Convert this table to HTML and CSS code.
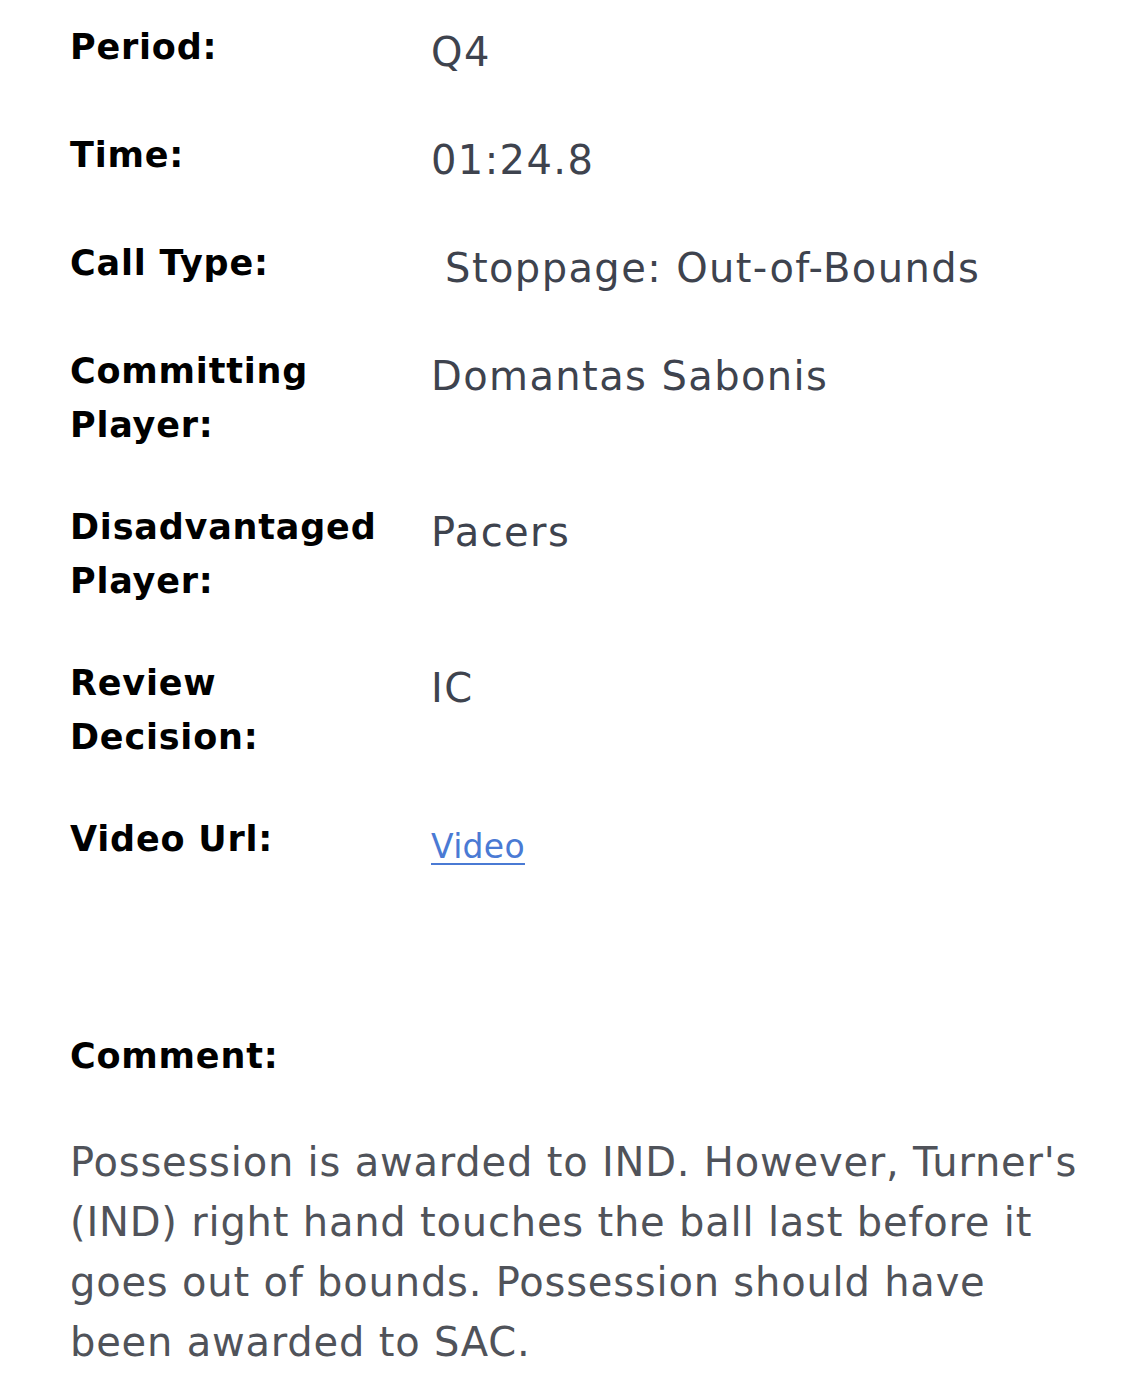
FILE: index.html
```html
<!DOCTYPE html>
<html lang="en">
<head>
<meta charset="utf-8">
<title>Call Detail</title>
<link rel="stylesheet" href="styles.css">
</head>
<body>
<main class="detail">
  <div class="rows">
    <div class="row">
      <div class="label">Period:</div>
      <div class="value">Q4</div>
    </div>
    <div class="row">
      <div class="label">Time:</div>
      <div class="value">01:24.8</div>
    </div>
    <div class="row">
      <div class="label">Call Type:</div>
      <div class="value">&nbsp;Stoppage: Out-of-Bounds</div>
    </div>
    <div class="row">
      <div class="label">Committing Player:</div>
      <div class="value">Domantas Sabonis</div>
    </div>
    <div class="row">
      <div class="label">Disadvantaged Player:</div>
      <div class="value">Pacers</div>
    </div>
    <div class="row">
      <div class="label">Review Decision:</div>
      <div class="value">IC</div>
    </div>
    <div class="row">
      <div class="label">Video Url:</div>
      <div class="value"><a class="video-link" href="#">Video</a></div>
    </div>
  </div>
  <section class="comment">
    <div class="label">Comment:</div>
    <p class="comment-text">Possession is awarded to IND. However, Turner's (IND) right hand touches the ball last before it goes out of bounds. Possession should have been awarded to SAC.</p>
  </section>
</main>
</body>
</html>
```
FILE: styles.css
```css
html, body {
  margin: 0;
  padding: 0;
  background: #ffffff;
}

body {
  font-family: "DejaVu Sans", "Liberation Sans", sans-serif;
}

.detail {
  padding: 0 50px 0 70px;
}

.rows {
  display: flex;
  flex-direction: column;
}

.row {
  display: grid;
  grid-template-columns: 361px 1fr;
  align-items: start;
  padding: 20px 0 28px;
}

.label {
  font-weight: bold;
  font-size: 35px;
  line-height: 54px;
  letter-spacing: 0.8px;
  color: #000000;
  width: 320px;
}

.value {
  font-size: 40px;
  line-height: 56px;
  padding-top: 4px;
  color: #3e434e;
  letter-spacing: 1.4px;
}

.video-link {
  font-size: 33px;
  letter-spacing: 0.3px;
  color: #4a7ad4;
  text-decoration: underline;
  text-decoration-thickness: 2px;
  text-underline-offset: 5px;
}

.comment {
  margin-top: 126px;
}

.comment-text {
  margin: 49px 0 0;
  font-size: 40px;
  line-height: 60px;
  letter-spacing: 0.8px;
  color: #50535a;
}
```
